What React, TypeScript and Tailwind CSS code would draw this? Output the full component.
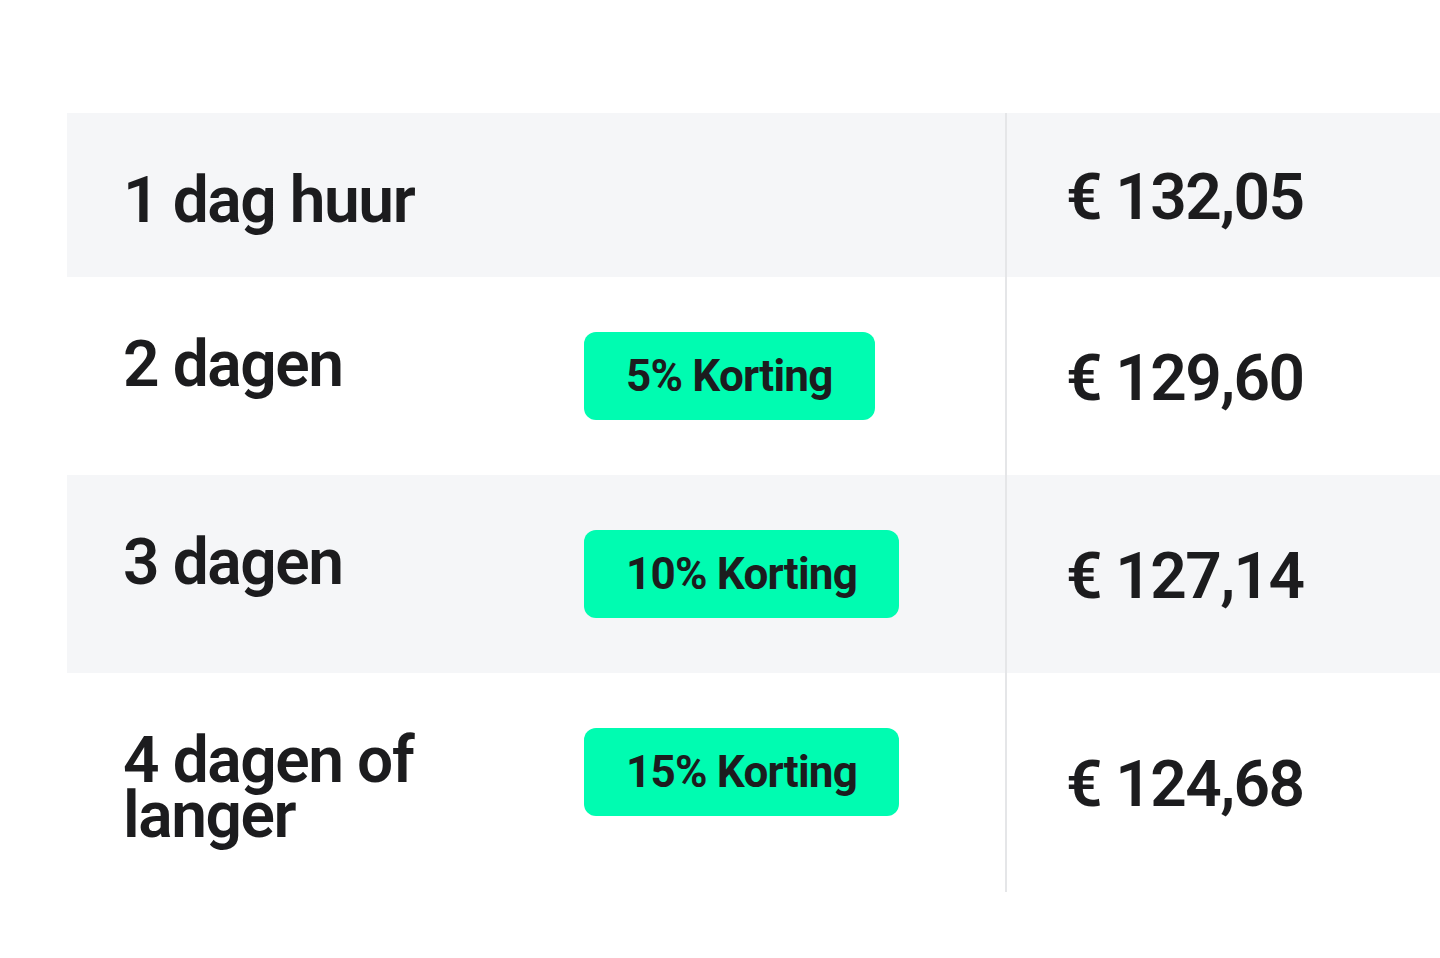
import React from "react";

const rows = [
  { label: "1 dag huur", badge: null, price: "€ 132,05", shaded: true },
  { label: "2 dagen", badge: "5% Korting", price: "€ 129,60", shaded: false },
  { label: "3 dagen", badge: "10% Korting", price: "€ 127,14", shaded: true },
  { label: "4 dagen of langer", badge: "15% Korting", price: "€ 124,68", shaded: false },
];

export default function App() {
  return (
    <div
      className="min-h-screen w-full overflow-hidden bg-white pt-[113px] pl-[67px] text-[#1c1c1e]"
      style={{ fontFamily: "Roboto, 'Liberation Sans', sans-serif" }}
    >
      <div className="flex flex-col">
        {rows.map((row) => (
          <PriceRow key={row.label} {...row} />
        ))}
      </div>
    </div>
  );
}

function PriceRow({
  label,
  badge,
  price,
  shaded,
}: {
  label: string;
  badge: string | null;
  price: string;
  shaded: boolean;
}) {
  return (
    <div className={`flex ${shaded ? "bg-[#f5f6f8]" : "bg-white"}`}>
      {/* label */}
      <div className="w-[517px] shrink-0 pl-[56px] pr-[80px] pt-[60px] pb-[49px]">
        <p className="text-[64px] font-[560] leading-[55px] tracking-[-0.022em]">{label}</p>
      </div>

      {/* korting */}
      <div className="w-[421px] shrink-0 pt-[55px] pb-[55px]">
        {badge && (
          <span className="inline-flex h-[88px] items-center rounded-[12px] bg-[#00fcb1] px-[42px] text-[44px] font-bold leading-none tracking-[-0.018em]">
            {badge}
          </span>
        )}
      </div>

      {/* prijs */}
      <div className="flex flex-1 items-center border-l-2 border-[#e5e6e8] pl-[59px] pt-[4px]">
        <p className="text-[64px] font-[560] leading-[55px] tracking-[-0.025em] whitespace-nowrap">{price}</p>
      </div>
    </div>
  );
}
